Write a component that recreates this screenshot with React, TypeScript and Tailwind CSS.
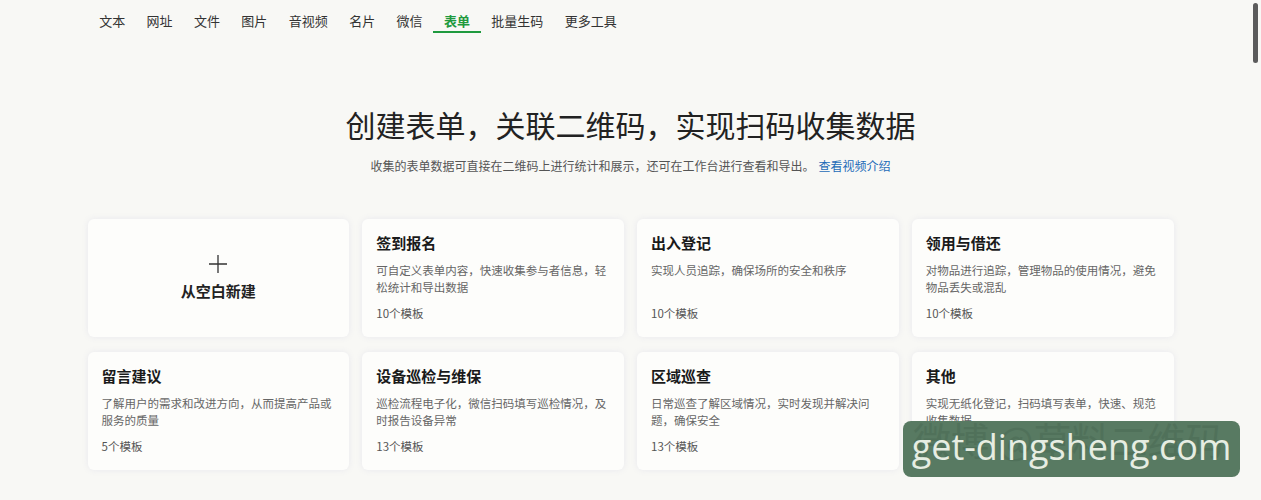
import React from 'react';

const tabs = ['文本', '网址', '文件', '图片', '音视频', '名片', '微信', '表单', '批量生码', '更多工具'];

const templates = [
  { title: '签到报名', desc: '可自定义表单内容，快速收集参与者信息，轻松统计和导出数据', count: 10 },
  { title: '出入登记', desc: '实现人员追踪，确保场所的安全和秩序', count: 10 },
  { title: '领用与借还', desc: '对物品进行追踪，管理物品的使用情况，避免物品丢失或混乱', count: 10 },
  { title: '留言建议', desc: '了解用户的需求和改进方向，从而提高产品或服务的质量', count: 5 },
  { title: '设备巡检与维保', desc: '巡检流程电子化，微信扫码填写巡检情况，及时报告设备异常', count: 13 },
  { title: '区域巡查', desc: '日常巡查了解区域情况，实时发现并解决问题，确保安全', count: 13 },
  { title: '其他', desc: '实现无纸化登记，扫码填写表单，快速、规范收集数据', count: null },
];

const cardClass =
  'bg-[#fdfdfb] rounded-md shadow-[0_0_6px_rgba(120,120,190,0.12)] h-[118px]';

function TemplateCard({ title, desc, count }: { title: string; desc: string; count: number | null }) {
  return (
    <div className={`${cardClass} px-[14px] pt-[13px] pb-[15px] flex flex-col`}>
      <div className="text-[15px] leading-[22px] font-bold text-[#1a1a1a]">{title}</div>
      <div className="mt-[8px] min-h-[34px] text-[11.5px] leading-[17px] text-[#666]">{desc}</div>
      {count !== null && (
        <div className="mt-[9px] text-[11.5px] leading-[17px] text-[#555]">{count}个模板</div>
      )}
    </div>
  );
}

export default function App() {
  return (
    <div
      className="relative min-h-screen bg-[#f8f8f5] overflow-hidden"
      style={{ fontFamily: '"Noto Sans CJK SC", "Noto Sans", sans-serif' }}
    >
      <div className="w-[1086px] mx-auto">
        <nav className="flex pt-[11px] pl-[1px]">
          {tabs.map((t) => (
            <div
              key={t}
              className={`px-[10.7px] text-[13px] leading-[20px] border-b-2 ${
                t === '表单'
                  ? 'text-[#1f9a3e] font-bold border-[#1f9a3e]'
                  : 'text-[#333] border-transparent'
              }`}
            >
              {t}
            </div>
          ))}
        </nav>

        <h1 className="mt-[71px] text-center text-[30px] leading-[40px] text-[#222] font-normal">
          创建表单，关联二维码，实现扫码收集数据
        </h1>
        <p className="mt-[13px] text-center text-[12px] leading-[18px] text-[#555]">
          收集的表单数据可直接在二维码上进行统计和展示，还可在工作台进行查看和导出。
          <span className="ml-1 text-[#1d6bb8]">查看视频介绍</span>
        </p>

        <div className="mt-[44px] grid grid-cols-4 gap-x-[13px] gap-y-[15px]">
          <div className={`${cardClass} flex flex-col items-center justify-center gap-[6px]`}>
            <svg width="20" height="20" viewBox="0 0 20 20" className="text-[#333]">
              <path d="M10 1v18M1 10h18" stroke="currentColor" strokeWidth="1.3" fill="none" />
            </svg>
            <div className="text-[15px] leading-[22px] font-bold text-[#222]">从空白新建</div>
          </div>
          {templates.map((tpl) => (
            <TemplateCard key={tpl.title} {...tpl} />
          ))}
        </div>
      </div>

      {/* browser scrollbar */}
      <div className="absolute right-[3px] top-[3px] w-[5px] h-[60px] rounded-full bg-[#5c5c5c]" />

      {/* watermark */}
      <div className="absolute left-[903px] top-[421px] w-[337px] h-[56px] rounded-lg bg-[#587a62] overflow-hidden">
        <div className="absolute left-[10px] top-[-6px] whitespace-nowrap text-[38px] leading-[48px] text-[#50715a]">
          微博 @草料二维码
        </div>
        <div
          className="absolute inset-0 flex items-center justify-center text-[36px] leading-none text-[#e6ede2] pb-[4px]"
          style={{ fontFamily: '"Open Sans", sans-serif' }}
        >
          get-dingsheng.com
        </div>
      </div>
    </div>
  );
}
